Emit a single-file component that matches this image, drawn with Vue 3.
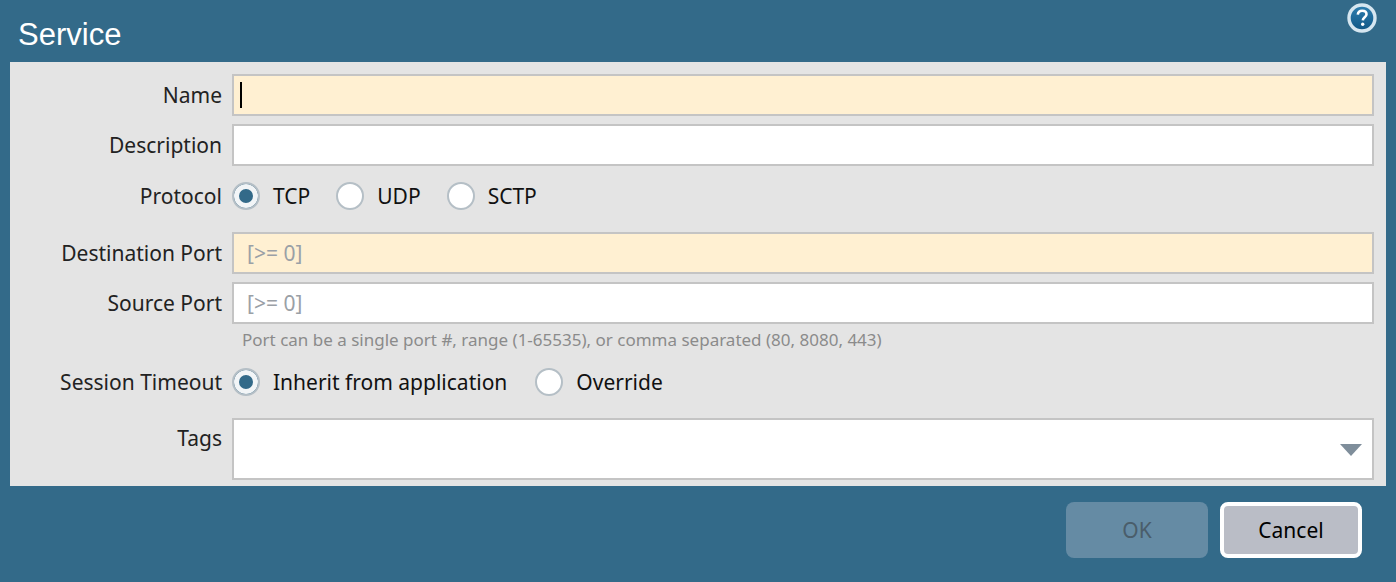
<script setup>
const protocols = [
  { label: 'TCP', on: true },
  { label: 'UDP', on: false },
  { label: 'SCTP', on: false }
]
const timeouts = [
  { label: 'Inherit from application', on: true },
  { label: 'Override', on: false }
]
</script>

<template>
  <div class="dialog">
    <header class="head">
      <h1 class="title">Service</h1>
      <svg class="help" viewBox="0 0 30 30" width="30" height="30" aria-label="Help">
        <defs>
          <linearGradient id="helpFill" x1="0" y1="0" x2="0" y2="1">
            <stop offset="0" stop-color="#2f7fb0" />
            <stop offset="1" stop-color="#0f5685" />
          </linearGradient>
        </defs>
        <circle cx="15" cy="15" r="13" fill="url(#helpFill)" stroke="#d6e6f0" stroke-width="3.4" />
        <path d="M10.8 11.6c.3-2.5 2-3.8 4.4-3.8 2.5 0 4.3 1.4 4.3 3.5 0 3-3.5 3-3.7 6" fill="none" stroke="#fff" stroke-width="2.6" />
        <circle cx="15.7" cy="21.3" r="1.7" fill="#fff" />
      </svg>
    </header>

    <main class="panel">
      <div class="row r-name">
        <label class="label">Name</label>
        <div class="field req"><span class="caret"></span></div>
      </div>
      <div class="row r-desc">
        <label class="label">Description</label>
        <div class="field"></div>
      </div>
      <div class="row r-proto">
        <label class="label">Protocol</label>
        <div class="radios">
          <span v-for="p in protocols" :key="p.label" class="radio">
            <span class="dot" :class="{ on: p.on }"></span>{{ p.label }}
          </span>
        </div>
      </div>
      <div class="row r-dest">
        <label class="label">Destination Port</label>
        <div class="field req"><span class="ph">[&gt;= 0]</span></div>
      </div>
      <div class="row r-src">
        <label class="label">Source Port</label>
        <div class="field"><span class="ph">[&gt;= 0]</span></div>
      </div>
      <p class="hint">Port can be a single port #, range (1-65535), or comma separated (80, 8080, 443)</p>
      <div class="row r-time">
        <label class="label">Session Timeout</label>
        <div class="radios wide">
          <span v-for="t in timeouts" :key="t.label" class="radio">
            <span class="dot" :class="{ on: t.on }"></span>{{ t.label }}
          </span>
        </div>
      </div>
      <div class="row r-tags">
        <label class="label top">Tags</label>
        <div class="field tall"><span class="arrow"></span></div>
      </div>
    </main>

    <footer class="foot">
      <button class="btn ok" disabled>OK</button>
      <button class="btn cancel">Cancel</button>
    </footer>
  </div>
</template>

<style>
html, body { margin: 0; background: #336a89; }
</style>

<style scoped>
.dialog {
  width: 1396px;
  height: 582px;
  background: #336a89;
  box-sizing: border-box;
  padding: 0 10px;
  font-family: "Noto Sans", "Open Sans", sans-serif;
  overflow: hidden;
}
.head {
  height: 62px;
  display: flex;
  align-items: center;
  justify-content: space-between;
  padding: 0 8px 0 8px;
}
.title {
  margin: 6px 0 0;
  font: 400 31px/1 "Liberation Sans Narrow", "Liberation Sans", sans-serif;
  color: #fff;
}
.help { margin: 0 1px 0 0; position: relative; top: 1px; transform: translateY(-14px); }
.panel {
  height: 424px;
  background: #e4e4e4;
  box-sizing: border-box;
  padding: 12px 12px 0 0;
}
.row { display: flex; align-items: center; }
.label {
  width: 212px;
  margin-right: 10px;
  text-align: right;
  font-size: 21px;
  line-height: 28px;
  color: #222;
  flex: none;
}
.label.top { align-self: flex-start; margin-top: 6px; }
.field {
  flex: 1;
  height: 42px;
  box-sizing: border-box;
  border: 2px solid #c4c4c4;
  background: #fff;
  display: flex;
  align-items: center;
  padding-left: 6px;
  position: relative;
}
.field.req { background: #fff0d2; }
.caret { width: 2px; height: 26px; background: #000; }
.ph { color: #9aa0a6; font-size: 21px; margin-left: 7px; }
.r-desc { margin-top: 8px; }
.r-proto { margin-top: 9px; height: 42px; }
.r-dest { margin-top: 15px; }
.r-src { margin-top: 8px; }
.hint {
  margin: 2px 0 0 232px;
  height: 28px;
  font-size: 17px;
  line-height: 28px;
  color: #8b8b8b;
}
.r-time { margin-top: 8px; height: 40px; }
.r-tags { margin-top: 16px; align-items: flex-start; }
.field.tall { height: 62px; }
.radios { display: flex; gap: 26px; }
.radios.wide { gap: 28px; }
.radio {
  display: flex;
  align-items: center;
  font-size: 21px;
  line-height: 28px;
  color: #111;
}
.dot {
  width: 28px;
  height: 28px;
  box-sizing: border-box;
  border-radius: 50%;
  background: #fff;
  border: 2px solid #b5bfc6;
  margin-right: 13px;
  position: relative;
}
.dot.on { background: #336a89; box-shadow: inset 0 0 0 5px #f2f5f7; }
.arrow {
  position: absolute;
  right: 10px;
  top: 24px;
  border-left: 11px solid transparent;
  border-right: 11px solid transparent;
  border-top: 12px solid #7f8e9b;
}
.foot {
  display: flex;
  justify-content: flex-end;
  gap: 12px;
  padding: 16px 24px 0 0;
}
.btn {
  width: 142px;
  height: 56px;
  box-sizing: border-box;
  border-radius: 8px;
  font-family: inherit;
  font-size: 21px;
}
.ok { background: #658ba4; border: 0; color: #4a5d6a; }
.cancel { background: #babdc6; border: 4px solid #fff; color: #000; }
</style>
